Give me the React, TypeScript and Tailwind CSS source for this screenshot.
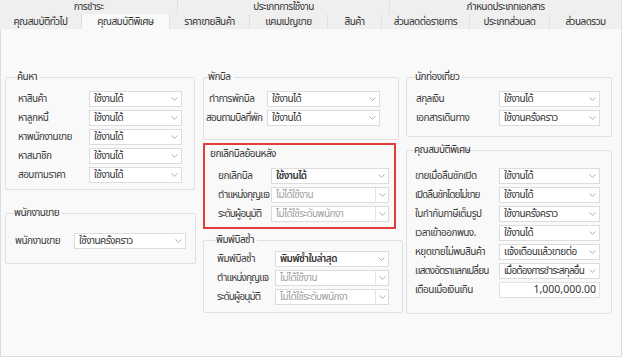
import React from 'react';

const FONT = "font-['Tahoma','Noto_Sans_Thai','Noto_Sans',sans-serif] tracking-[-0.55px]";

type RowDef = {
  label: string;
  value: string;
  disabled?: boolean;
  bold?: boolean;
  number?: boolean;
  tight?: boolean;
  narrow?: boolean;
  narrowValue?: boolean;
};

function Chevron({ boxed }: { boxed?: boolean }) {
  return (
    <span
      className={`flex h-full w-[13px] shrink-0 items-center justify-center ${boxed ? 'border-l border-[#e4e4e4]' : ''}`}
    >
      <svg width="7" height="4" viewBox="0 0 7 4" fill="none">
        <path d="M0.5 0.5L3.5 3.3L6.5 0.5" stroke="#a8a8a8" strokeWidth="0.9" />
      </svg>
    </span>
  );
}

function Field({ row, width }: { row: RowDef; width: string }) {
  if (row.number) {
    return (
      <div className={`${width} flex h-[16px] items-center justify-end border border-[#e2e2e2] bg-white pr-[3px] text-[10.5px] leading-[14px] tracking-normal text-[#333]`}>
        {row.value}
      </div>
    );
  }
  return (
    <div
      className={`${width} flex h-[16px] items-center overflow-hidden border border-[#dcdcdc] bg-white pl-[4px] text-[10px] leading-[14px] ${
        row.disabled ? 'text-[#a0a0a0]' : 'text-[#333]'
      } ${row.bold ? 'font-semibold' : ''} ${row.narrowValue ? 'tracking-[-0.85px]' : ''}`}
    >
      <span className="min-w-0 flex-1 overflow-hidden whitespace-nowrap">{row.value}</span>
      <Chevron boxed={row.disabled} />
    </div>
  );
}

function Rows({ rows, labelW, fieldW }: { rows: RowDef[]; labelW: string; fieldW: string }) {
  return (
    <div className="flex flex-col">
      {rows.map((r) => (
        <div key={r.label} className="flex h-[19px] items-center">
          <span
            className={`${labelW} shrink-0 overflow-visible whitespace-nowrap text-[10px] leading-[14px] text-[#3a3a3a] ${
              r.tight ? 'ml-[-3px] mr-[3px] tracking-[-0.75px]' : ''
            } ${r.narrow ? 'tracking-[-0.9px]' : ''}`}
          >
            {r.label}
          </span>
          <Field row={r} width={fieldW} />
        </div>
      ))}
    </div>
  );
}

function Group({ title, children, className = '' }: { title: string; children: React.ReactNode; className?: string }) {
  return (
    <fieldset className={`rounded-[2px] border border-[#e0e0e0] ${className}`}>
      <legend className="ml-[-1px] pr-[3px] text-[10px] leading-[14px] text-[#333]">{title}</legend>
      {children}
    </fieldset>
  );
}

const groupsTop = [
  { label: 'การชำระ', w: 'w-[178px]' },
  { label: 'ประเภทการใช้งาน', w: 'w-[212px]' },
  { label: 'กำหนดประเภทเอกสาร', w: 'flex-1' },
];

const tabs = [
  { label: 'คุณสมบัติทั่วไป', w: 'w-[82px]' },
  { label: 'คุณสมบัติพิเศษ', w: 'w-[88px]', active: true },
  { label: 'ราคาขายสินค้า', w: 'w-[80px]' },
  { label: 'แคมเปญขาย', w: 'w-[78px]' },
  { label: 'สินค้า', w: 'w-[54px]' },
  { label: 'ส่วนลดต่อรายการ', w: 'w-[88px]' },
  { label: 'ประเภทส่วนลด', w: 'w-[80px]' },
  { label: 'ส่วนลดรวม', w: 'flex-1' },
];

export default function App() {
  return (
    <div className={`${FONT} flex h-[357px] w-[622px] flex-col overflow-hidden bg-white`}>
      {/* Tab header */}
      <div className="flex h-[14px] bg-[#efefef]">
        {groupsTop.map((g) => (
          <div key={g.label} className={`${g.w} flex items-center justify-center border-r border-[#e0e0e0] text-[10px] leading-none text-[#333]`}>
            {g.label}
          </div>
        ))}
      </div>
      <div className="flex h-[15px] bg-[#efefef]">
        {tabs.map((t) => (
          <div
            key={t.label}
            className={`${t.w} flex items-center justify-center border-r border-[#e0e0e0] text-[10px] leading-none text-[#333] ${
              t.active ? 'bg-[#f9f9f9]' : ''
            }`}
          >
            {t.label}
          </div>
        ))}
      </div>

      {/* Content */}
      <div className="flex flex-1 border border-t-0 border-[#dcdcdc] bg-[#f9f9f9] pl-[4px] pt-[41px]">
        {/* Column 1 */}
        <div className="flex w-[190px] flex-col gap-[16px]">
          <Group title="ค้นหา" className="px-[12px] pb-[5px] pt-[5px]">
            <Rows
              labelW="w-[71px]"
              fieldW="w-[93px]"
              rows={[
                { label: 'หาสินค้า', value: 'ใช้งานได้' },
                { label: 'หาลูกหนี้', value: 'ใช้งานได้' },
                { label: 'หาพนักงานขาย', value: 'ใช้งานได้' },
                { label: 'หาสมาชิก', value: 'ใช้งานได้' },
                { label: 'สอบถามราคา', value: 'ใช้งานได้' },
              ]}
            />
          </Group>
          <Group title="พนักงานขาย" className="px-[9px] pb-[13px] pt-[11px]">
            <Rows labelW="w-[59px]" fieldW="w-[112px]" rows={[{ label: 'พนักงานขาย', value: 'ใช้งานครั้งคราว' }]} />
          </Group>
        </div>

        {/* Column 2 */}
        <div className="ml-[8px] flex w-[196px] flex-col">
          <Group title="พักบิล" className="px-[5px] pb-[12px] pt-[5px]">
            <Rows
              labelW="w-[58px]"
              fieldW="w-[113px]"
              rows={[
                { label: 'ทำการพักบิล', value: 'ใช้งานได้' },
                { label: 'สอบถามบิลที่พัก', value: 'ใช้งานได้', tight: true },
              ]}
            />
          </Group>
          <div className="mr-[3px] mt-[3px] border-2 border-[#e23c3c] px-[5px] pb-[4px] pt-[2px]">
            <div className="text-[10px] leading-[14px] text-[#333]">ยกเลิกบิลย้อนหลัง</div>
            <div className="pl-[8px] pt-[5px]">
              <Rows
                labelW="w-[53px]"
                fieldW="w-[119px]"
                rows={[
                  { label: 'ยกเลิกบิล', value: 'ใช้งานได้', bold: true },
                  { label: 'ตำแหน่งกุญแจ', value: 'ไม่ได้ใช้งาน', disabled: true, narrow: true },
                  { label: 'ระดับผู้อนุมัติ', value: 'ไม่ได้ใช้ระดับพนักงา', disabled: true, narrow: true },
                ]}
              />
            </div>
          </div>
          <Group title="พิมพ์บิลซ้ำ" className="mt-[4px] px-[13px] pb-[6px] pt-[2px]">
            <Rows
              labelW="w-[58px]"
              fieldW="w-[114px]"
              rows={[
                { label: 'พิมพ์บิลซ้ำ', value: 'พิมพ์ซ้ำใบล่าสุด', bold: true },
                { label: 'ตำแหน่งกุญแจ', value: 'ไม่ได้ใช้งาน', disabled: true, narrow: true },
                { label: 'ระดับผู้อนุมัติ', value: 'ไม่ได้ใช้ระดับพนักงา', disabled: true, narrow: true },
              ]}
            />
          </Group>
        </div>

        {/* Column 3 */}
        <div className="ml-[7px] flex w-[206px] flex-col gap-[6px]">
          <Group title="นักท่องเที่ยว" className="px-[9px] pb-[9px] pt-[5px]">
            <Rows
              labelW="w-[83px]"
              fieldW="w-[101px]"
              rows={[
                { label: 'สกุลเงิน', value: 'ใช้งานได้' },
                { label: 'เอกสารเดินทาง', value: 'ใช้งานครั้งคราว' },
              ]}
            />
          </Group>
          <Group title="คุณสมบัติพิเศษ" className="px-[8px] pb-[14px] pt-[9px]">
            <Rows
              labelW="w-[84px]"
              fieldW="w-[101px]"
              rows={[
                { label: 'ขายเมื่อลิ้นชักเปิด', value: 'ใช้งานได้' },
                { label: 'เปิดลิ้นชักโดยไม่ขาย', value: 'ใช้งานได้', narrow: true },
                { label: 'ใบกำกับภาษีเต็มรูป', value: 'ใช้งานครั้งคราว' },
                { label: 'เวลาเข้าออกพนง.', value: 'ใช้งานได้' },
                { label: 'หยุดขายไม่พบสินค้า', value: 'แจ้งเตือนแล้วขายต่อ' },
                { label: 'แสดงอัตราแลกเปลี่ยน', value: 'เมื่อต้องการชำระสกุลอื่น', narrow: true, narrowValue: true },
                { label: 'เตือนเมื่อเงินเกิน', value: '1,000,000.00', number: true },
              ]}
            />
          </Group>
        </div>
      </div>
    </div>
  );
}
